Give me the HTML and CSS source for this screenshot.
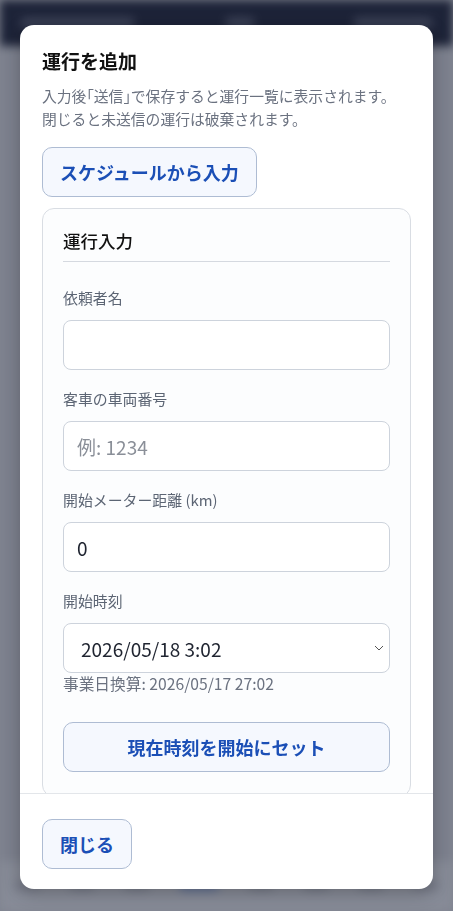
FILE: index.html
```html
<!DOCTYPE html>
<html lang="ja">
<head>
  <meta charset="UTF-8" />
  <meta name="viewport" content="width=device-width, initial-scale=1.0"/>
  <title>運行を追加</title>
  <link rel="stylesheet" href="styles.css">
</head>
<body>
  <div class="app">
    <header class="app-header">
      <span class="blob blob-title"></span>
      <span class="blob blob-mid"></span>
      <span class="blob blob-right"></span>
    </header>
    <main class="app-main"></main>
    <nav class="app-nav">
      <span class="nav-blob"></span>
      <span class="nav-blob"></span>
      <span class="nav-blob"></span>
      <span class="nav-blob active"></span>
      <span class="nav-blob"></span>
      <span class="nav-blob"></span>
      <span class="nav-blob"></span>
      <span class="nav-blob"></span>
    </nav>
  </div>

  <div class="overlay">
    <div class="modal">
      <div class="modal-body">
        <h2 class="modal-title">運行を追加</h2>
        <p class="modal-desc">入力後｢送信｣で保存すると運行一覧に表示されます。<br>閉じると未送信の運行は破棄されます。</p>
        <button class="btn btn-auto">スケジュールから入力</button>

        <section class="card">
          <h3 class="card-title">運行入力</h3>

          <div class="field first">
            <label>依頼者名</label>
            <input type="text" />
          </div>

          <div class="field">
            <label>客車の車両番号</label>
            <input type="text" placeholder="例: 1234" />
          </div>

          <div class="field">
            <label>開始メーター距離 (km)</label>
            <input type="text" value="0" />
          </div>

          <div class="field">
            <label>開始時刻</label>
            <div class="select-wrap">
              <select>
                <option>2026/05/18 3:02</option>
              </select>
              <svg class="chevron" width="10" height="6" viewBox="0 0 10 6"><path d="M1 1l4 4 4-4" fill="none" stroke="#555" stroke-width="1"/></svg>
            </div>
            <p class="hint">事業日換算: 2026/05/17 27:02</p>
          </div>

          <button class="btn btn-wide">現在時刻を開始にセット</button>
        </section>
      </div>

      <div class="modal-footer">
        <button class="btn">閉じる</button>
      </div>
    </div>
  </div>
</body>
</html>
```

FILE: styles.css
```css
body {
  margin: 0;
  font-family: "Noto Sans CJK JP", "Noto Sans", sans-serif;
  color: #1f2430;
  background: #7f838f;
  height: 911px;
  overflow: hidden;
}
.app {
  height: 911px;
  display: flex;
  flex-direction: column;
  filter: blur(5px);
}
.app-header {
  height: 46px;
  background: #1d2338;
  display: flex;
  align-items: center;
  gap: 40px;
  padding: 0 20px;
}
.blob {
  display: block;
  height: 12px;
  border-radius: 6px;
  background: #3a4055;
}
.blob-title { width: 115px; }
.blob-mid { width: 30px; margin-left: 50px; }
.blob-right { width: 80px; margin-left: auto; }
.app-main {
  flex: 1;
  background: #7d818e;
}
.app-nav {
  height: 50px;
  background: #878b97;
  display: flex;
  justify-content: space-around;
  align-items: center;
}
.nav-blob {
  width: 26px;
  height: 10px;
  border-radius: 5px;
  background: #767a88;
}
.nav-blob.active {
  width: 40px;
  background: #5f6f94;
}

.overlay {
  position: fixed;
  inset: 0;
  padding: 25px 20px 22px;
  display: flex;
}
.modal {
  flex: 1;
  background: #fff;
  border-radius: 14px;
  box-shadow: 0 4px 18px rgba(0,0,0,0.25);
  display: flex;
  flex-direction: column;
  overflow: hidden;
}
.modal-body {
  flex: 1;
  overflow: hidden;
  padding: 22px 22px 0;
}
.modal-title {
  margin: 0 0 10px;
  font-size: 19px;
  font-weight: 700;
  line-height: 27px;
  color: #111;
}
.modal-desc {
  margin: 0 0 17px;
  font-size: 14.8px;
  line-height: 23px;
  color: #6b7280;
}
.btn {
  font-family: inherit;
  font-size: 18px;
  font-weight: 700;
  color: #1b4fb6;
  background: #f5f8fe;
  border: 1px solid #aebcd3;
  border-radius: 10px;
  height: 50px;
  padding: 0 17px;
  cursor: pointer;
}
.btn-auto {
  margin-bottom: 11px;
}
.btn-wide {
  width: 100%;
  margin-top: 27px;
}
.card {
  border: 1px solid #d9dde3;
  border-radius: 12px;
  background: #fcfdfe;
  padding: 20px 20px 24px;
}
.card-title {
  margin: 0;
  padding-bottom: 8px;
  border-bottom: 1px solid #d5d9e0;
  font-size: 17.5px;
  font-weight: 500;
  line-height: 24px;
  color: #111;
}
.field {
  margin-top: 18px;
}
.field.first {
  margin-top: 25px;
}
.field label {
  display: block;
  font-size: 14.9px;
  line-height: 22px;
  color: #5c6574;
  margin-bottom: 11px;
}
.field input,
.field select {
  box-sizing: border-box;
  width: 100%;
  height: 50px;
  font-family: inherit;
  font-size: 19px;
  color: #1f2430;
  background: #fff;
  border: 1px solid #cdd3dc;
  border-radius: 8px;
  padding: 0 13px;
  outline: none;
}
.field input::placeholder {
  color: #8a8f98;
}
.select-wrap {
  position: relative;
}
.field select {
  appearance: none;
  padding-left: 17px;
}
.chevron {
  position: absolute;
  right: 6px;
  top: 22px;
}
.hint {
  margin: 0;
  font-size: 15.7px;
  line-height: 22px;
  color: #6b7280;
}
.modal-footer {
  border-top: 1px solid #e3e6ea;
  padding: 25px 22px 20px;
}
```
